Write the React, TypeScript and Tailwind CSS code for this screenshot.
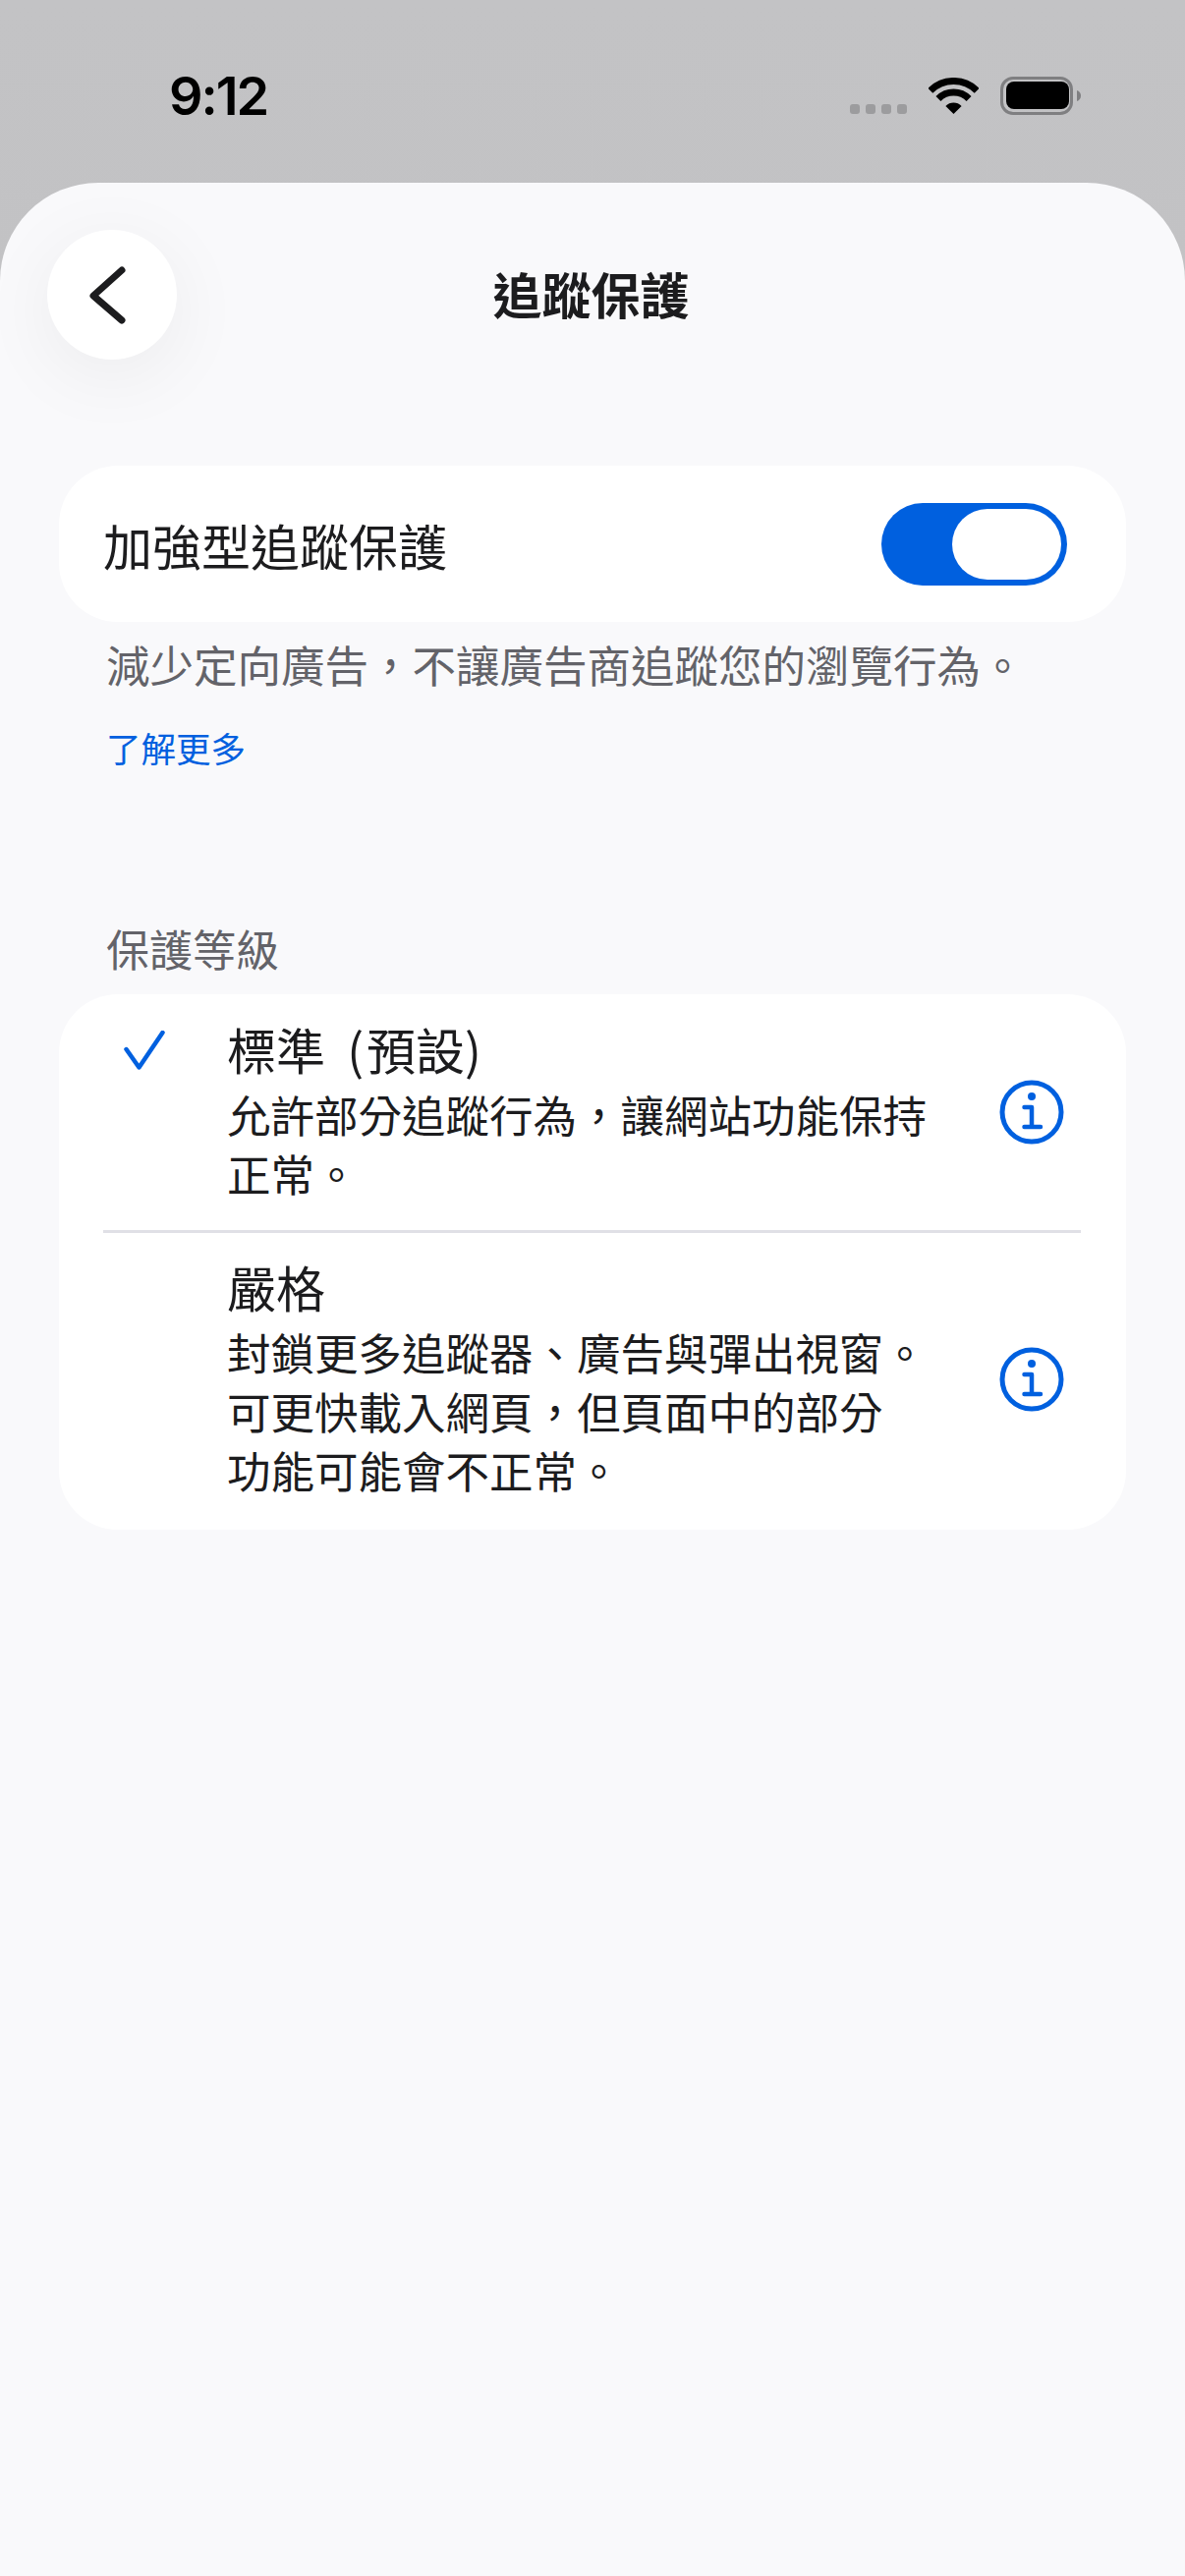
import React from 'react';

const cjk = "font-['Noto_Sans_CJK_TC','Noto_Sans_CJK_SC',sans-serif]";

const WifiIcon = () => (
  <svg width="51" height="37" viewBox="0 0 51 37" fill="none">
    <path d="M1.8 13.3A33.5 33.5 0 0 1 49.2 13.3" stroke="#000" strokeWidth="7" />
    <path d="M9.94 21.44A22 22 0 0 1 41.06 21.44" stroke="#000" strokeWidth="7" />
    <path d="M25.5 37L17.4 28.9A11.4 11.4 0 0 1 33.6 28.9Z" fill="#000" />
  </svg>
);

const BatteryIcon = () => (
  <svg width="82" height="39" viewBox="0 0 82 39" fill="none">
    <rect x="1.5" y="1.5" width="71" height="36" rx="11.5" stroke="#7f7f81" strokeWidth="3" />
    <rect x="6" y="5" width="64" height="28" rx="8" fill="#000" />
    <path d="M78 14c2.4.8 4 2.8 4 5.500s-1.600 4.700-4 5.500z" fill="#7f7f81" />
  </svg>
);

const InfoIcon = () => (
  <svg width="66" height="66" viewBox="0 0 66 66" fill="none" className="shrink-0">
    <circle cx="33" cy="33" r="30" stroke="#0060df" strokeWidth="5" />
    <circle cx="33" cy="17" r="4" fill="#0060df" />
    <path d="M25.500 28H33V48M25.500 48H42" stroke="#0060df" strokeWidth="4.500" strokeLinecap="round" strokeLinejoin="round" />
  </svg>
);

const CheckIcon = () => (
  <svg width="42" height="40" viewBox="0 0 42 40" fill="none" className="shrink-0">
    <path d="M2.500 19L15.500 37.500L39.500 2" stroke="#0060df" strokeWidth="4.500" strokeLinecap="round" strokeLinejoin="round" />
  </svg>
);

interface LevelRowProps {
  title: React.ReactNode;
  lines: string[];
  checked?: boolean;
  rowPad: string;
}

const LevelRow = ({ title, lines, checked, rowPad }: LevelRowProps) => (
  <div className={`flex items-center pl-[66px] pr-[63px] ${rowPad}`}>
    <div className="flex-1 flex">
      <div className="w-[42px] h-[60px] mr-[63px] flex items-center">{checked && <CheckIcon />}</div>
      <div>
        <div className="text-[50px] leading-[56px] pb-1 text-[#1c1c1e]">{title}</div>
        <div className="mt-[5px] text-[44.5px] leading-[60px] text-[#1c1c1e] whitespace-nowrap">
          {lines.map((line) => (
            <div key={line}>{line}</div>
          ))}
        </div>
      </div>
    </div>
    <InfoIcon />
  </div>
);

export default function App() {
  return (
    <div className={`w-[1206px] h-[2622px] flex flex-col bg-gradient-to-b from-[#c3c3c5] to-[#bababc] ${cjk}`}>
      {/* Status bar */}
      <div className="h-[186px] shrink-0 flex justify-between pl-[172px] pr-[106px] pt-[78px]">
        <div className="font-['Inter',sans-serif] font-semibold text-[54px] leading-[40px] text-black tracking-[-2px]">9:12</div>
        <div className="flex items-end h-[39px]">
          <div className="flex gap-1.5 mb-px">
            <span className="w-[10px] h-[10px] rounded-[3px] bg-[#9c9c9e]" />
            <span className="w-[10px] h-[10px] rounded-[3px] bg-[#9c9c9e]" />
            <span className="w-[10px] h-[10px] rounded-[3px] bg-[#9c9c9e]" />
            <span className="w-[10px] h-[10px] rounded-[3px] bg-[#9c9c9e]" />
          </div>
          <div className="ml-[22px] mb-px flex"><WifiIcon /></div>
          <div className="ml-[22px] flex"><BatteryIcon /></div>
        </div>
      </div>

      {/* Sheet */}
      <div className="flex-1 bg-[#f9f9fb] rounded-t-[100px]">
        <header className="grid grid-cols-[132px_1fr_132px] items-center px-12 pt-12">
          <button className="w-[132px] h-[132px] rounded-full bg-white flex items-center justify-center shadow-[0_16px_80px_rgba(0,0,0,0.06)]">
            <svg width="132" height="132" viewBox="0 0 132 132" fill="none">
              <path d="M76 41L47 67L76 92" stroke="#1c1c1e" strokeWidth="7" strokeLinecap="round" strokeLinejoin="round" />
            </svg>
          </button>
          <h1 className="text-center text-[50px] leading-[56px] mb-1 font-semibold text-[#1c1c1e] -ml-[3px]">追蹤保護</h1>
          <div />
        </header>

        <main className="mx-[60px] mt-[108px]">
          <div className="h-[159px] rounded-[60px] bg-white flex items-center justify-between pl-[45px] pr-[60px]">
            <span className="text-[50px] leading-[60px] text-[#1c1c1e]">加強型追蹤保護</span>
            <button className="w-[189px] h-[84px] rounded-full bg-[#0060df] flex items-center justify-end p-1.5">
              <span className="w-[111px] h-[72px] rounded-full bg-white" />
            </button>
          </div>

          <p className="mt-[13px] px-12 text-[44.500px] leading-[60px] text-[#636369] whitespace-nowrap">
            {'減少定向廣告\uFF0C不讓廣告商追蹤您的瀏覽行為。'}
          </p>
          <a className="block mt-[30px] px-12 text-[35.500px] leading-[50px] text-[#0060df]">了解更多</a>

          <h2 className="mt-[149px] px-12 text-[44px] leading-[60px] text-[#636369] font-normal">保護等級</h2>

          <div className="mt-[17px] rounded-[60px] bg-white">
            <LevelRow
              checked
              title={<>標準 <span className="ml-[11px] mr-[3px]">(</span>預設)</>}
              lines={['允許部分追蹤行為\uFF0C讓網站功能保持', '正常。']}
              rowPad="pt-[27px] pb-[28px]"
            />
            <div className="h-[3px] ml-[45px] mr-[46px] bg-[#e0e0e6]" />
            <LevelRow
              title="嚴格"
              lines={['封鎖更多追蹤器、廣告與彈出視窗。', '可更快載入網頁\uFF0C但頁面中的部分', '功能可能會不正常。']}
              rowPad="pt-[26px] pb-[31px]"
            />
          </div>
        </main>
      </div>
    </div>
  );
}
